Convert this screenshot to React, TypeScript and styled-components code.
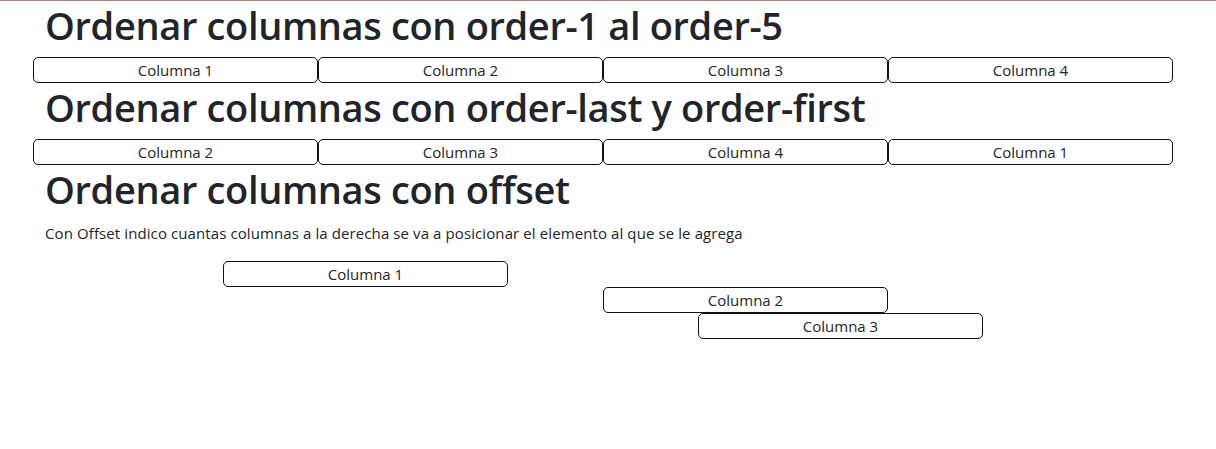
import React from "react";
import styled, { createGlobalStyle } from "styled-components";

const Global = createGlobalStyle`
  html, body { margin: 0; padding: 0; background: #fff; }
  body {
    border-top: 1px solid #b97b7b;
    font-family: "Open Sans", "Noto Sans", sans-serif;
    font-size: 16px;
    line-height: 24px;
    color: #212529;
  }
  * { box-sizing: border-box; }
`;

const Container = styled.div`
  width: 1140px;
  margin-left: 33px;
  padding: 0 12px;
`;

const Title = styled.h1`
  margin: 0 0 8px;
  font-size: 38px;
  font-weight: 600;
  line-height: 48px;
  letter-spacing: -0.35px;
  color: #212529;
`;

const Text = styled.p`
  margin: 0 0 16px;
  font-size: 15px;
  line-height: 24px;
  letter-spacing: 0.1px;
`;

const Row = styled.div`
  display: grid;
  grid-template-columns: repeat(12, 1fr);
  margin: 0 -12px;
`;

const Col = styled.div<{ $start: number }>`
  grid-column: ${(p) => p.$start} / span 3;
  grid-row: 1;
  border: 1px solid #111;
  border-radius: 5px;
  text-align: center;
  font-size: 15px;
  line-height: 24px;
`;

export default function App() {
  return (
    <>
      <Global />
      <Container>
        <Title>Ordenar columnas con order-1 al order-5</Title>
        <Row>
          <Col $start={1}>Columna 1</Col>
          <Col $start={4}>Columna 2</Col>
          <Col $start={7}>Columna 3</Col>
          <Col $start={10}>Columna 4</Col>
        </Row>
        <Title>Ordenar columnas con order-last y order-first</Title>
        <Row>
          <Col $start={1}>Columna 2</Col>
          <Col $start={4}>Columna 3</Col>
          <Col $start={7}>Columna 4</Col>
          <Col $start={10}>Columna 1</Col>
        </Row>
        <Title>Ordenar columnas con offset</Title>
        <Text>
          Con Offset indico cuantas columnas a la derecha se va a posicionar el elemento al que se le agrega
        </Text>
        <Row>
          <Col $start={3}>Columna 1</Col>
        </Row>
        <Row>
          <Col $start={7}>Columna 2</Col>
        </Row>
        <Row>
          <Col $start={8}>Columna 3</Col>
        </Row>
      </Container>
    </>
  );
}
